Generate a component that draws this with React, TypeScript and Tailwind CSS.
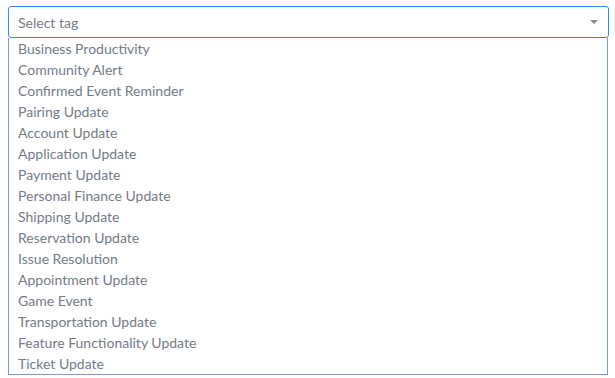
const tags = [
  'Business Productivity',
  'Community Alert',
  'Confirmed Event Reminder',
  'Pairing Update',
  'Account Update',
  'Application Update',
  'Payment Update',
  'Personal Finance Update',
  'Shipping Update',
  'Reservation Update',
  'Issue Resolution',
  'Appointment Update',
  'Game Event',
  'Transportation Update',
  'Feature Functionality Update',
  'Ticket Update',
]

export default function App() {
  return (
    <div className="w-[615px] h-[378px] bg-white font-['Lato','Liberation_Sans',sans-serif] text-[14px] text-[#737c88]">
      <div className="pt-[6px] pl-[8px] pr-[6px]">
        {/* Select box */}
        <div className="h-[32px] border border-[#2f8cf3] rounded-[3px] flex items-center justify-between pl-[9px] pr-[10px]">
          <span className="text-[#767d87]">Select tag</span>
          <span className="w-0 h-0 border-l-[4px] border-r-[4px] border-t-[4px] border-l-transparent border-r-transparent border-t-[#8a8f96]" />
        </div>
        {/* Options */}
        <ul className="border border-t-0 border-[#7d97d3] mr-[1px] pl-[9px]">
          {tags.map(t => (
            <li key={t} className="h-[21px] leading-[22px]">{t}</li>
          ))}
        </ul>
      </div>
    </div>
  )
}
